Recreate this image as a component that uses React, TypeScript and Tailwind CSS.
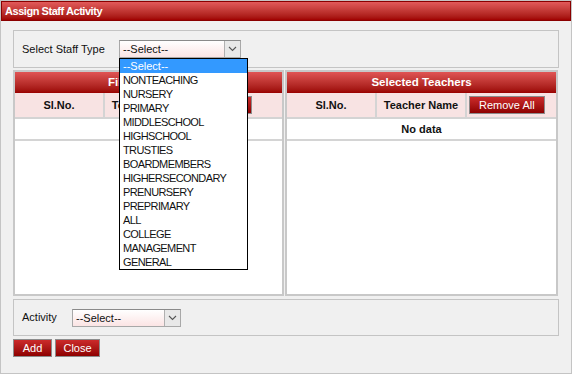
const STAFF_TYPES = [
  '--Select--',
  'NONTEACHING',
  'NURSERY',
  'PRIMARY',
  'MIDDLESCHOOL',
  'HIGHSCHOOL',
  'TRUSTIES',
  'BOARDMEMBERS',
  'HIGHERSECONDARY',
  'PRENURSERY',
  'PREPRIMARY',
  'ALL',
  'COLLEGE',
  'MANAGEMENT',
  'GENERAL',
];

// ── Select box ───────────────────────────────────────────────
function SelectBox({ width }: { width: string }) {
  return (
    <div className={`${width} h-[18px] flex border border-[#a8a8a8] border-t-[#8a8a8a] bg-linear-to-b from-white to-[#fbe4e4]`}>
      <span className="flex-1 pl-[3px] leading-[16px] text-[11px] text-[#111]">--Select--</span>
      <span className="w-[16px] h-full flex items-center justify-center border-l border-[#b0b0b0] bg-[#e8e8e8]">
        <svg width="9" height="6" viewBox="0 0 9 6">
          <polyline points="1,1 4.5,4.5 8,1" fill="none" stroke="#555" strokeWidth="1.1" />
        </svg>
      </span>
    </div>
  );
}

function RedButton({ label, width }: { label: string; width: string }) {
  return (
    <button className={`${width} h-[18px] border border-[#8c8c8c] bg-linear-to-b from-[#cc2a2a] to-[#8e0000] text-white text-[11px] leading-[16px] text-center`}>
      {label}
    </button>
  );
}

// ── Teacher panel ────────────────────────────────────────────
function TeacherPanel({ title, action, actionPad, width, emptyText }: { title: string; action: string; actionPad: string; width: string; emptyText: string }) {
  return (
    <div className={`${width} h-[226px] border-2 border-[#c8c8c8] bg-white flex flex-col`}>
      <div className="h-[21px] shrink-0 flex items-center justify-center bg-linear-to-b from-[#e05454] to-[#9a0000] text-white font-bold text-[11.5px]">
        {title}
      </div>
      <div className="h-[26px] shrink-0 flex bg-[#f8e3e3] border-b-2 border-[#d4d4d4] text-[11px] font-bold text-[#111]">
        <div className="w-[90px] flex items-center justify-center border-r-2 border-[#d4d4d4]">Sl.No.</div>
        <div className="w-[90px] flex items-center justify-center border-r-2 border-[#d4d4d4]">Teacher Name</div>
        <div className="flex-1 flex items-center pl-[2px]">
          <button className={`h-[18px] ${actionPad} border border-[#8c8c8c] bg-linear-to-b from-[#cc2a2a] to-[#8e0000] text-white text-[11px] font-normal leading-[16px]`}>
            {action}
          </button>
        </div>
      </div>
      <div className="h-[22px] shrink-0 flex items-center justify-center border-b-2 border-[#d4d4d4] text-[11px] font-bold text-[#111]">
        {emptyText}
      </div>
    </div>
  );
}

export default function App() {
  return (
    <div className="relative w-[572px] h-[374px] bg-[#f0f0f0] border border-[#c4c4c4] overflow-hidden text-[11px] text-[#111]" style={{ fontFamily: '"Liberation Sans", Arial, sans-serif' }}>
      {/* Title bar */}
      <div className="h-[20px] border border-[#8a0000] bg-linear-to-b from-[#e25a5a] to-[#a00000] text-white font-bold text-[11px] tracking-[-0.45px] leading-[18px] pl-[3px]">
        Assign Staff Activity
      </div>

      <div className="pl-[12px]">
        {/* Staff type */}
        <div className="mt-[9px] w-[546px] h-[38px] border border-[#c4c4c4] flex items-center pl-[8px]">
          <span className="w-[97px]">Select Staff Type</span>
          <SelectBox width="w-[122px]" />
        </div>

        {/* Panels */}
        <div className="mt-[2px] flex gap-[1px]">
          <TeacherPanel title="Filter Teachers" action="Select All" actionPad="px-[4px]" width="w-[271px]" emptyText="" />
          <TeacherPanel title="Selected Teachers" action="Remove All" actionPad="px-[9px]" width="w-[273px]" emptyText="No data" />
        </div>

        {/* Activity */}
        <div className="mt-[3px] w-[546px] h-[37px] border border-[#c4c4c4] flex items-center pl-[8px]">
          <span className="w-[50px]">Activity</span>
          <SelectBox width="w-[109px]" />
        </div>

        {/* Actions */}
        <div className="mt-[3px] flex gap-[3px]">
          <RedButton label="Add" width="w-[39px]" />
          <RedButton label="Close" width="w-[45px]" />
        </div>
      </div>

      {/* Open dropdown */}
      <div className="absolute left-[118px] top-[57px] w-[129px] border border-black bg-white">
        {STAFF_TYPES.map((t, i) => (
          <div
            key={t}
            className={`h-[14px] leading-[14px] pl-[3px] text-[11px] ${i === 0 ? 'bg-[#3399ff] text-white' : 'text-[#111] tracking-[-0.6px]'}`}
          >
            {t}
          </div>
        ))}
      </div>
    </div>
  );
}
